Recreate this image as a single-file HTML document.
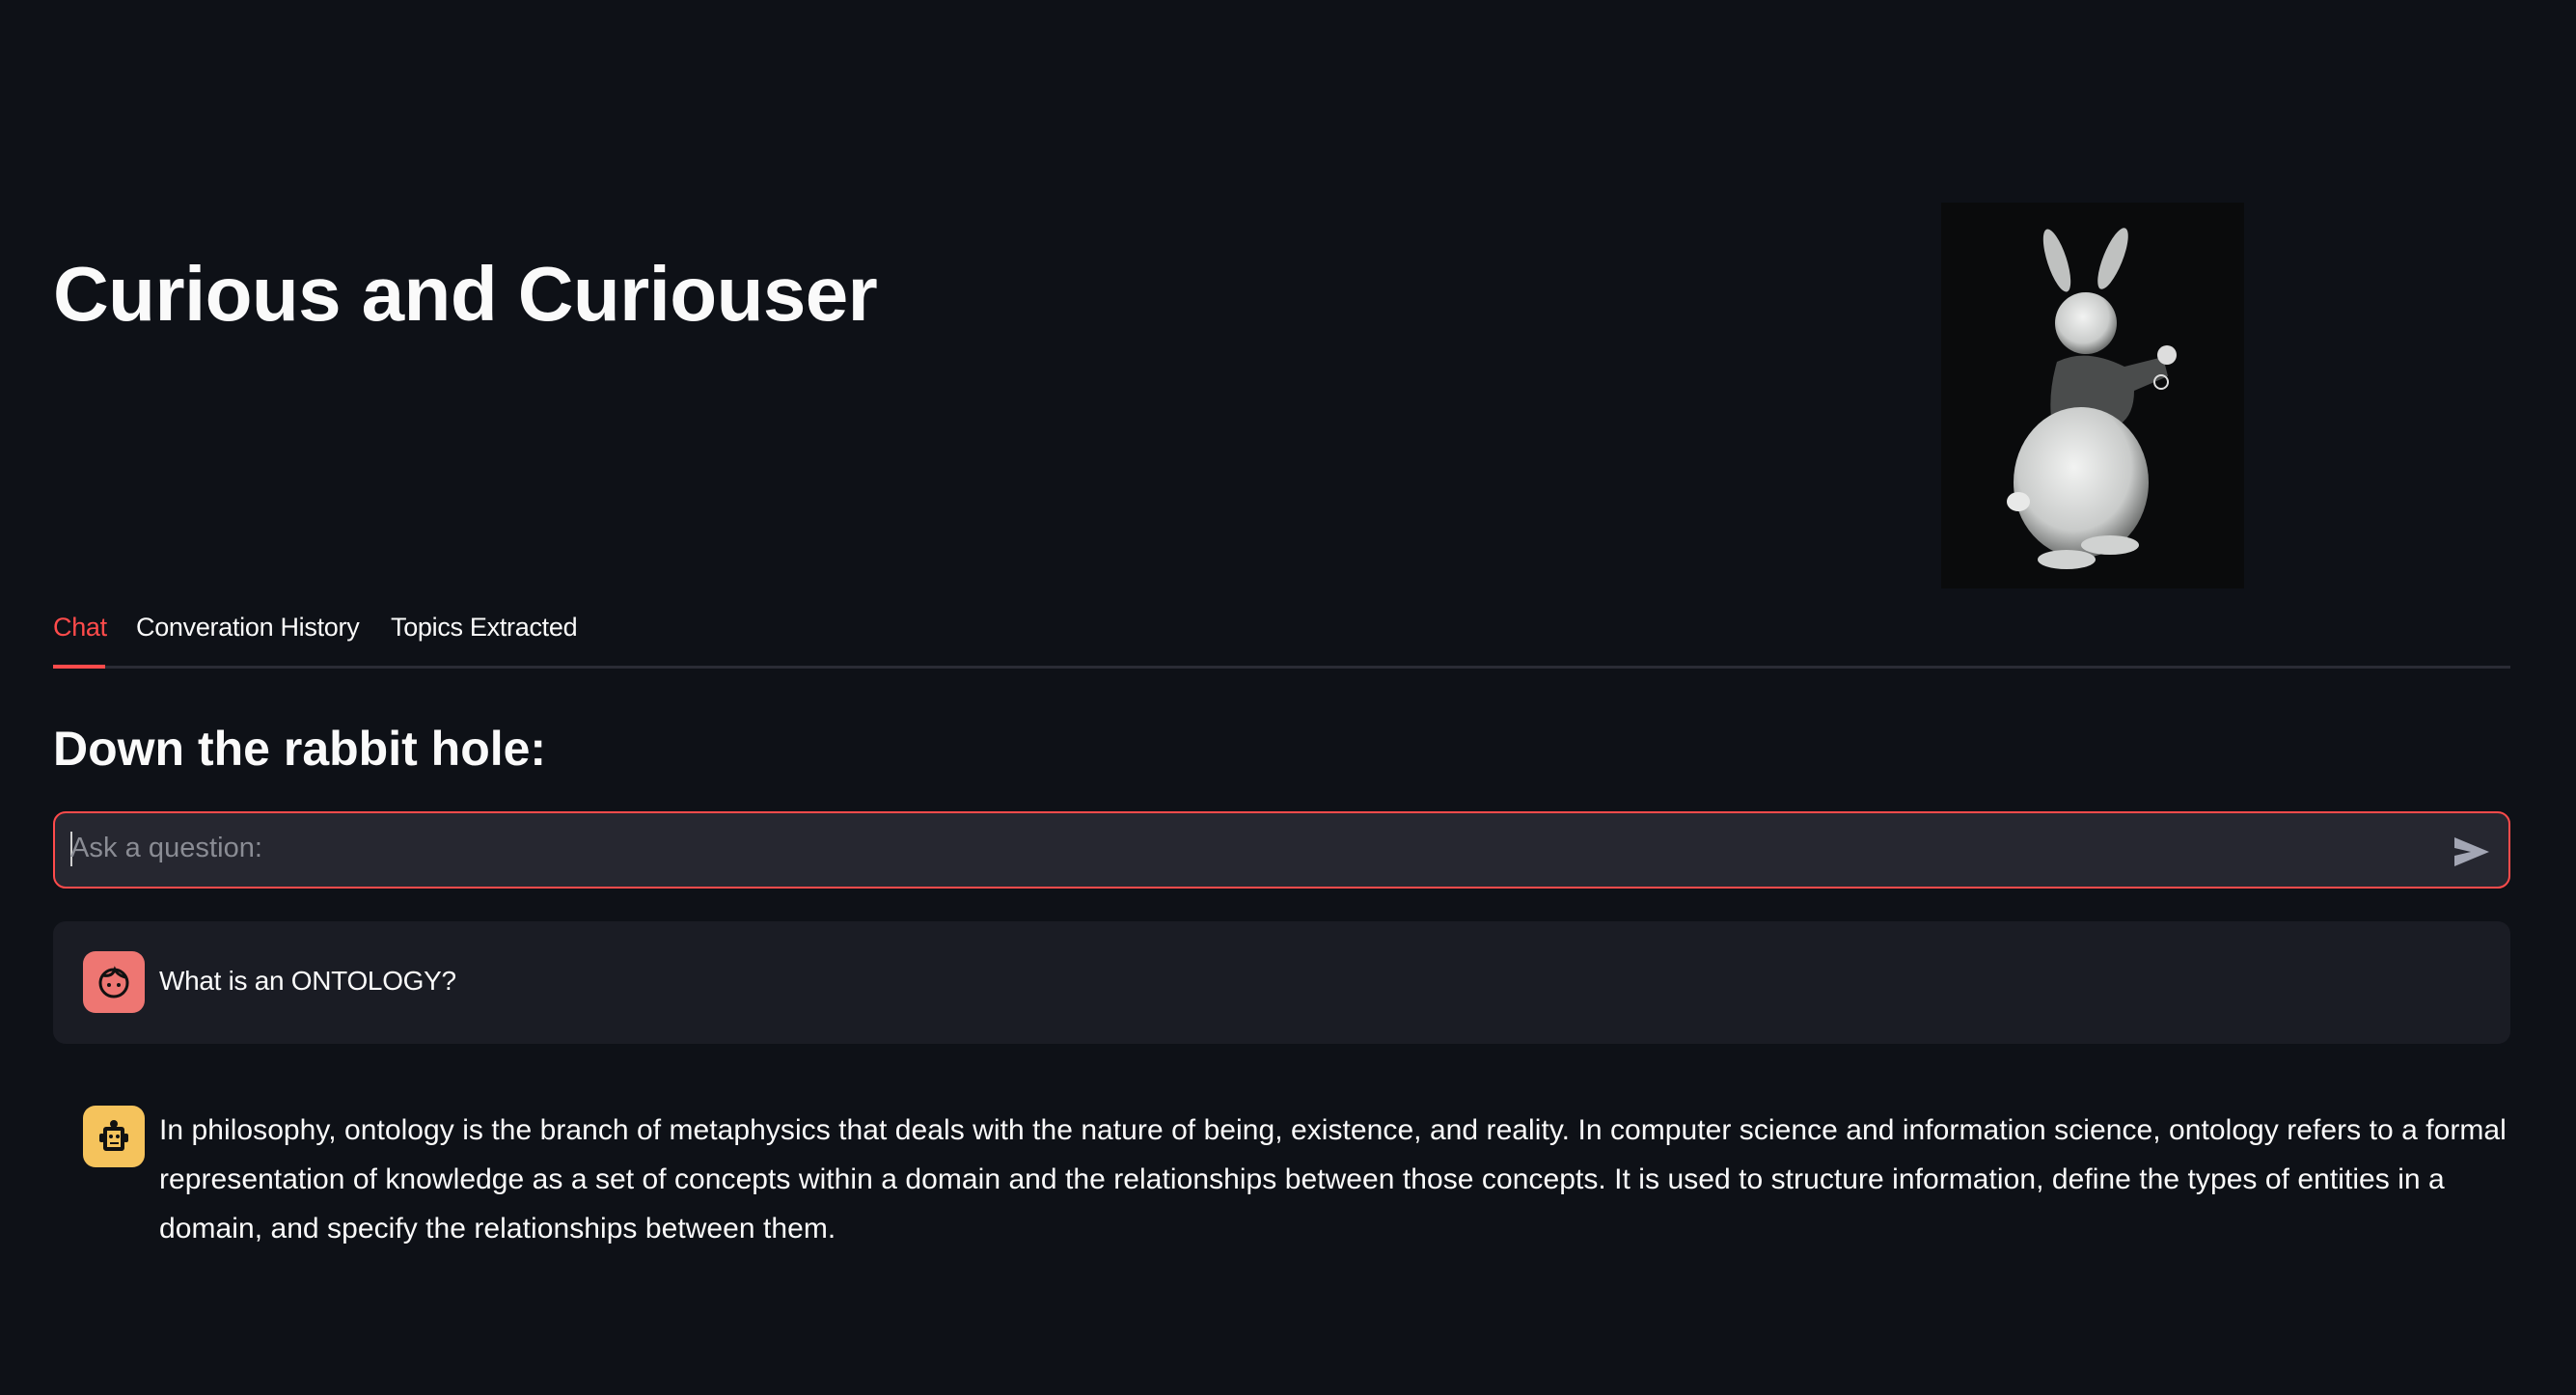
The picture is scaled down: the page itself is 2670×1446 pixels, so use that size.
<!DOCTYPE html>
<html><head><meta charset="utf-8"><style>
html,body{margin:0;padding:0;background:#0e1117;width:2670px;height:1446px;overflow:hidden;font-family:"Liberation Sans",sans-serif;color:#fafafa}
.abs{position:absolute;white-space:nowrap}
h1{position:absolute;left:55px;top:250px;margin:0;font-size:80px;font-weight:700;letter-spacing:-0.6px;line-height:110px}
.tab{position:absolute;top:634px;font-size:27px;line-height:32px;letter-spacing:-0.3px}
.tabline{position:absolute;left:55px;top:690px;width:2547px;height:3px;background:#2a2c35}
.tabact{position:absolute;left:55px;top:689px;width:54px;height:4px;background:#ff4b4b}
h3{position:absolute;left:55px;top:744px;margin:0;font-size:50px;font-weight:700;letter-spacing:0px;line-height:64px}
.input{position:absolute;left:55px;top:841px;width:2543px;height:76px;border:2px solid #ff4b4b;border-radius:13px;background:#262730}
.msg{position:absolute;left:55px;top:955px;width:2547px;height:127px;background:#1a1c24;border-radius:13px}
.av{position:absolute;left:86px;width:64px;height:64px;border-radius:13px}
.txt{font-size:30px;letter-spacing:0.05px}
</style></head><body>
<h1>Curious and Curiouser</h1>
<svg class="abs" style="left:2012px;top:210px" width="314" height="400" viewBox="0 0 314 400">
<rect width="314" height="400" fill="#0a0b0c"/>
<defs><radialGradient id="g" cx="45%" cy="40%" r="60%"><stop offset="0" stop-color="#f2f3f2"/><stop offset="0.7" stop-color="#c9cbca"/><stop offset="1" stop-color="#6e706f"/></radialGradient></defs>
<ellipse cx="120" cy="60" rx="10" ry="34" fill="#bfc1c0" transform="rotate(-18 120 60)"/>
<ellipse cx="178" cy="58" rx="10" ry="34" fill="#bfc1c0" transform="rotate(22 178 58)"/>
<ellipse cx="150" cy="125" rx="32" ry="32" fill="url(#g)"/>
<path d="M120 165 Q150 150 190 170 L230 160 L235 180 L200 195 Q200 220 185 230 L115 230 Q110 200 120 165Z" fill="#4a4c4c"/>
<ellipse cx="145" cy="290" rx="70" ry="78" fill="url(#g)"/>
<ellipse cx="80" cy="310" rx="12" ry="10" fill="#e8e9e8"/>
<ellipse cx="175" cy="355" rx="30" ry="10" fill="#d0d2d1"/>
<ellipse cx="130" cy="370" rx="30" ry="10" fill="#d0d2d1"/>
<circle cx="234" cy="158" r="10" fill="#ddd"/>
<circle cx="228" cy="186" r="7" fill="none" stroke="#ddd" stroke-width="2"/>
</svg>
<div class="tab" style="left:55px;color:#ff4b4b">Chat</div>
<div class="tab" style="left:141px">Converation History</div>
<div class="tab" style="left:405px">Topics Extracted</div>
<div class="tabline"></div><div class="tabact"></div>
<h3>Down the rabbit hole:</h3>
<div class="input">
<div class="abs" style="left:16px;top:19px;width:2px;height:36px;background:#d0d0d0"></div>
<div class="abs txt" style="left:16px;top:20px;color:#8a8c94;font-size:29px">Ask a question:</div>
<svg class="abs" style="left:2486px;top:24px" width="38" height="32" viewBox="0 0 38 32"><path d="M1 1 L37 16 L1 31 L1 20 L18 16 L1 12Z" fill="#a3a6b4"/></svg>
</div>
<div class="msg"></div>
<div class="av" style="top:986px;background:#ee7672">
<svg width="64" height="64" viewBox="0 0 64 64"><circle cx="32" cy="33" r="14" fill="none" stroke="#111" stroke-width="3"/><path d="M21 25 Q30 27 33 19 Q36 25 44 27" fill="none" stroke="#111" stroke-width="3"/><circle cx="27" cy="35" r="2" fill="#111"/><circle cx="37" cy="35" r="2" fill="#111"/></svg></div>
<div class="abs txt" style="left:165px;top:1001px;font-size:28px;letter-spacing:-0.3px">What is an ONTOLOGY?</div>
<div class="av" style="top:1146px;background:#f5c35c">
<svg width="64" height="64" viewBox="0 0 64 64"><circle cx="32" cy="19" r="4" fill="#111"/><rect x="21" y="22" width="22" height="25" rx="3" fill="#111"/><rect x="25" y="26" width="14" height="17" fill="#f5c35c"/><rect x="17" y="29" width="5" height="9" rx="2" fill="#111"/><rect x="42" y="29" width="5" height="9" rx="2" fill="#111"/><circle cx="29" cy="32" r="2" fill="#111"/><circle cx="36" cy="32" r="2" fill="#111"/><rect x="28" y="38" width="9" height="2" fill="#111"/></svg></div>
<div class="abs txt" style="left:165px;top:1146px;line-height:51px">In philosophy, ontology is the branch of metaphysics that deals with the nature of being, existence, and reality. In computer science and information science, ontology refers to a formal<br>representation of knowledge as a set of concepts within a domain and the relationships between those concepts. It is used to structure information, define the types of entities in a<br>domain, and specify the relationships between them.</div>
</body></html>
